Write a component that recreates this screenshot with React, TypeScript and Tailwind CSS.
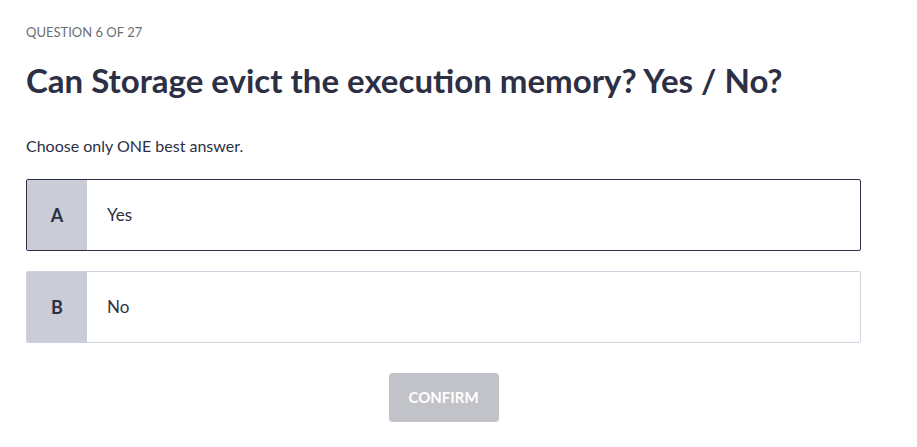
export default function App() {
  const options = [
    { key: "A", text: "Yes", selected: true },
    { key: "B", text: "No", selected: false },
  ];
  return (
    <div className="min-h-screen bg-white font-['Lato',sans-serif] text-[#2d2f45]">
      <div className="w-[835px] ml-[26px] pt-[23px]">
        <div className="text-[13px] leading-[18px] text-[#6a6f73] uppercase">Question 6 of 27</div>
        <h1 className="mt-[19px] text-[33px] leading-[40px] font-bold">
          Can Storage evict the execution memory? Yes / No?
        </h1>
        <p className="mt-[36px] text-[16px] leading-[20px]">Choose only ONE best answer.</p>
        <div className="mt-[23px] flex flex-col gap-[20px]">
          {options.map((o) => (
            <div
              key={o.key}
              className={`flex h-[72px] rounded-[2px] overflow-hidden border ${
                o.selected ? "border-[#2d2f45]" : "border-[#d1d2e0]"
              }`}
            >
              <div className="w-[60px] bg-[#cacdd7] flex items-center justify-center text-[18px] font-bold">
                {o.key}
              </div>
              <div className="flex items-center pl-[20px] text-[17px]">{o.text}</div>
            </div>
          ))}
        </div>
        <div className="mt-[30px] flex justify-center">
          <button className="w-[110px] h-[49px] rounded-[4px] bg-[#c2c3c8] text-white text-[15px] font-bold">
            CONFIRM
          </button>
        </div>
      </div>
    </div>
  );
}
